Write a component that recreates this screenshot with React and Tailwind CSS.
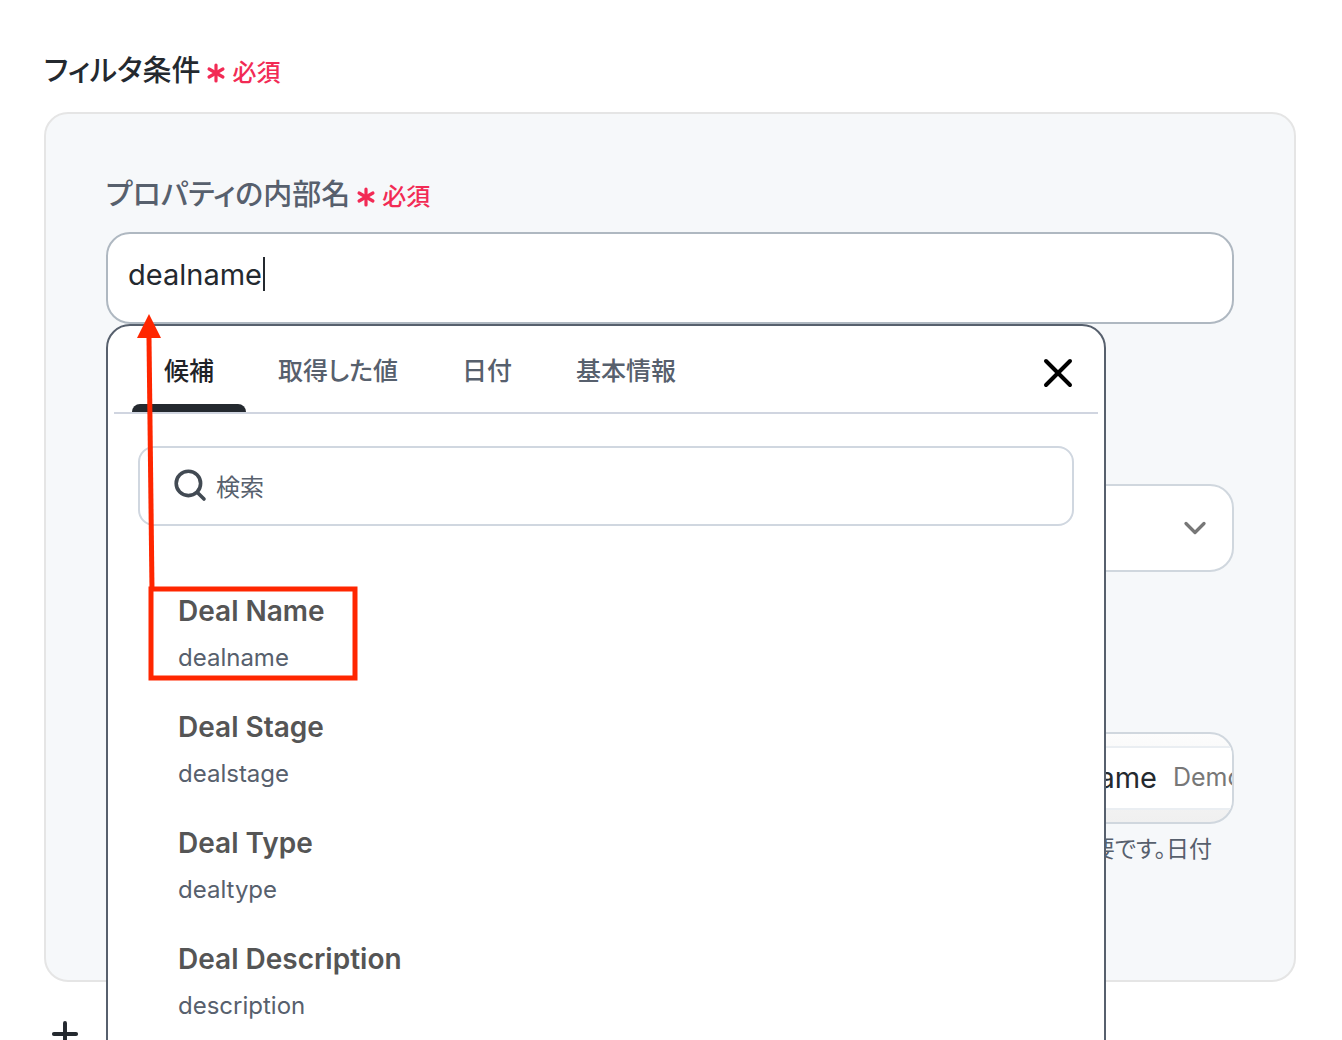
import { useState } from 'react'
import { Asterisk, ChevronDown, Plus, Search, X } from 'lucide-react'

const tabs = ['候補', '取得した値', '日付', '基本情報']

const suggestions = [
  { label: 'Deal Name', value: 'dealname' },
  { label: 'Deal Stage', value: 'dealstage' },
  { label: 'Deal Type', value: 'dealtype' },
  { label: 'Deal Description', value: 'description' }
]

const RequiredMark = () => (
  <span className="flex items-center pt-1 text-[24px] leading-[34px] font-medium text-[#f22b55]">
    <Asterisk size={32} strokeWidth={2.4} aria-hidden="true" />
    必須
  </span>
)

const SuggestionPopup = ({ onSelect }) => {
  const [activeTab, setActiveTab] = useState(tabs[0])
  const [keyword, setKeyword] = useState('')

  const items = suggestions.filter((s) => s.label.toLowerCase().includes(keyword.toLowerCase()))

  return (
    <div className="absolute top-full left-0 z-10 w-[1000px] max-w-full rounded-3xl border-2 border-[#57606d] bg-white pb-20">
      <div className="mx-1.5 flex items-center justify-between border-b-2 border-[#d0d5e0] pr-4 pl-[18px]">
        <div role="tablist" className="flex [font-feature-settings:'palt']">
          {tabs.map((tab) => (
            <button
              key={tab}
              type="button"
              role="tab"
              aria-selected={tab === activeTab}
              onClick={() => setActiveTab(tab)}
              className={`relative h-[86px] px-8 pt-1.5 text-[25px] font-medium ${
                tab === activeTab ? 'text-[#1f2328]' : 'text-[#57606d]'
              }`}
            >
              {tab}
              {tab === activeTab && (
                <span className="absolute inset-x-0 bottom-0 h-2 rounded-t-lg bg-[#24292f]" />
              )}
            </button>
          ))}
        </div>
        <button type="button" aria-label="閉じる" className="pt-2 text-black">
          <X size={48} strokeWidth={2} />
        </button>
      </div>

      <label className="mx-[30px] mt-8 flex h-20 items-center gap-2 rounded-2xl border-2 border-[#d0d7e0] px-8">
        <svg className="size-9 shrink-0 text-[#424a53]" viewBox="0 0 36 36" fill="none" stroke="currentColor" strokeWidth="3.6" strokeLinecap="round" aria-hidden="true">
          <circle cx="16.4" cy="15.4" r="12.2" />
          <path d="M25.4 24.4L32 31" />
        </svg>
        <input
          type="text"
          aria-label="検索"
          placeholder="検索"
          value={keyword}
          onChange={(e) => setKeyword(e.target.value)}
          className="w-full bg-transparent pt-1 text-[24px] text-[#57606d] outline-none placeholder:text-[#57606d]"
        />
      </label>

      <ul className="mt-12">
        {items.map((item) => (
          <li key={item.value}>
            <button
              type="button"
              onClick={() => onSelect(item.value)}
              className="flex w-full flex-col gap-2 px-[70px] pt-4 pb-3.5 text-left"
            >
              <span className="text-[28px] leading-[42px] font-semibold text-[#555555]">{item.label}</span>
              <span className="text-[24px] leading-[36px] text-[#57606d]">{item.value}</span>
            </button>
          </li>
        ))}
      </ul>

      {/* arrow from the first suggestion up to the input */}
      <svg
        className="pointer-events-none absolute -top-4 left-6"
        width="232"
        height="380"
        viewBox="0 0 232 380"
        fill="none"
        aria-hidden="true"
      >
        <path d="M17 28L20 280" stroke="#ff2600" strokeWidth="5" />
        <path d="M17 4L29 28H5Z" fill="#ff2600" />
        <rect x="19" y="279" width="204" height="89" stroke="#ff2600" strokeWidth="5" />
      </svg>
    </div>
  )
}

const App = () => {
  const [property, setProperty] = useState('dealname')

  return (
    <main className="h-screen overflow-hidden bg-white pt-[50px] pr-[46px] pl-11 font-[Inter,'Noto_Sans_CJK_JP',sans-serif] text-[#24292f]">
      <h1 className="mb-5 flex items-center text-[29px] leading-[42px] font-medium [font-feature-settings:'palt']">
        フィルタ条件
        <RequiredMark />
      </h1>

      <section className="rounded-3xl border-2 border-[#e5e5e5] bg-[#f6f8fa] px-[60px] pt-[60px] pb-[114px]">
        <label
          htmlFor="property"
          className="mb-4 flex items-center text-[29px] leading-[42px] font-medium text-[#57606d] [font-feature-settings:'palt']"
        >
          プロパティの内部名
          <RequiredMark />
        </label>

        <div className="flex flex-col gap-40">
          <div className="relative">
            <input
              id="property"
              type="text"
              value={property}
              onChange={(e) => setProperty(e.target.value)}
              className="block h-[92px] w-full rounded-3xl border-2 border-[#afb8c1] bg-white px-5 pb-2 text-[29px] outline-none"
            />
            <span className="absolute top-[25px] left-[157px] h-[34px] w-0.5 bg-[#24292f]" />
            <SuggestionPopup onSelect={setProperty} />
          </div>

          <div className="relative">
            <select
              aria-label="条件"
              className="block h-[88px] w-full appearance-none rounded-3xl border-2 border-[#d0d7de] bg-white px-5 text-[28px]"
            />
            <ChevronDown
              size={36}
              strokeWidth={2.2}
              className="pointer-events-none absolute top-[26px] right-[21px] text-[#777777]"
              aria-hidden="true"
            />
          </div>

          <div>
            <div className="flex h-[92px] items-center justify-end overflow-hidden rounded-3xl border-2 border-[#d0d7de] bg-linear-to-b from-[#fcfcfc] to-[#f0f0f0]">
              <div className="flex h-16 flex-1 items-center justify-end gap-4 border-y-2 border-[#eaeef2] bg-white whitespace-nowrap">
                <span className="text-[29px]">Deal Name</span>
                <span className="w-[59px] overflow-hidden text-[25px] text-[#777777]">Demo</span>
              </div>
            </div>
            <p className="mt-2 pr-[22px] text-right text-[23px] leading-[34px] text-[#57606d] [font-feature-settings:'palt']">
              必要です。日付
            </p>
          </div>
        </div>
      </section>

      <button type="button" aria-label="追加" className="mt-[33px] ml-0.5 block">
        <Plus size={38} strokeWidth={2.5} />
      </button>
    </main>
  )
}

export default App
